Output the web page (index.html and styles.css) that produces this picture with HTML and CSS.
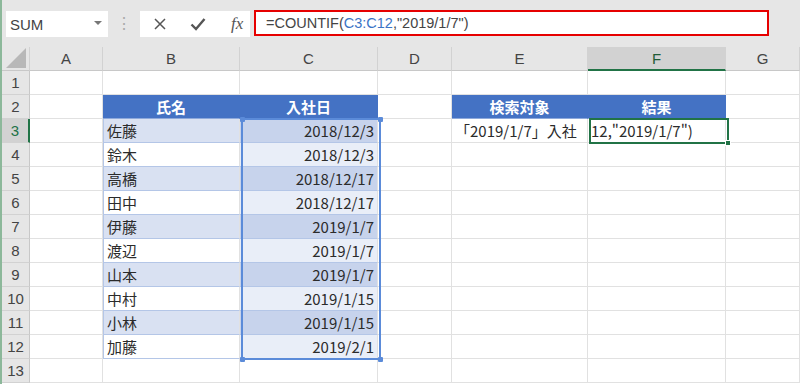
FILE: index.html
```html
<!DOCTYPE html>
<html lang="ja">
<head>
<meta charset="utf-8">
<link rel="stylesheet" href="styles.css">
</head>
<body>
<div class="app">
  <div class="toolbar">
    <div class="namebox"><span>SUM</span><span class="caret"></span></div>
    <div class="vdots">⋮</div>
    <div class="fxbox">
      <svg class="ico" width="14" height="14" viewBox="0 0 14 14"><path d="M2 2 L12 12 M12 2 L2 12" stroke="#555" stroke-width="1.5" fill="none"/></svg>
      <svg class="ico" width="16" height="14" viewBox="0 0 16 14"><path d="M1.5 7.5 L6 12 L14.5 2" stroke="#555" stroke-width="2.4" fill="none"/></svg>
      <span class="fx">fx</span>
    </div>
    <div class="formula">=COUNTIF(<span class="ref">C3:C12</span>,"2019/1/7")</div>
  </div>
  <div class="sheet">
    <div class="ch corner"><svg width="22" height="22" viewBox="0 0 22 22"><polygon points="21,1 21,21 1,21" fill="#b8b8b8"/></svg></div>
    <div class="ch">A</div><div class="ch">B</div><div class="ch">C</div><div class="ch">D</div><div class="ch">E</div><div class="ch sel">F</div><div class="ch">G</div>

    <div class="rh">1</div><div class="c"></div><div class="c"></div><div class="c"></div><div class="c"></div><div class="c"></div><div class="c"></div><div class="c"></div>

    <div class="rh">2</div><div class="c"></div><div class="c th">氏名</div><div class="c th">入社日</div><div class="c"></div><div class="c th">検索対象</div><div class="c th">結果</div><div class="c"></div>

    <div class="rh sel">3</div><div class="c"></div><div class="c nm odd">佐藤</div><div class="c dt odd">2018/12/3</div><div class="c"></div><div class="c tx">「2019/1/7」入社</div><div class="c tx res">12,"2019/1/7")</div><div class="c"></div>

    <div class="rh">4</div><div class="c"></div><div class="c nm">鈴木</div><div class="c dt">2018/12/3</div><div class="c"></div><div class="c"></div><div class="c"></div><div class="c"></div>

    <div class="rh">5</div><div class="c"></div><div class="c nm odd">高橋</div><div class="c dt odd">2018/12/17</div><div class="c"></div><div class="c"></div><div class="c"></div><div class="c"></div>

    <div class="rh">6</div><div class="c"></div><div class="c nm">田中</div><div class="c dt">2018/12/17</div><div class="c"></div><div class="c"></div><div class="c"></div><div class="c"></div>

    <div class="rh">7</div><div class="c"></div><div class="c nm odd">伊藤</div><div class="c dt odd">2019/1/7</div><div class="c"></div><div class="c"></div><div class="c"></div><div class="c"></div>

    <div class="rh">8</div><div class="c"></div><div class="c nm">渡辺</div><div class="c dt">2019/1/7</div><div class="c"></div><div class="c"></div><div class="c"></div><div class="c"></div>

    <div class="rh">9</div><div class="c"></div><div class="c nm odd">山本</div><div class="c dt odd">2019/1/7</div><div class="c"></div><div class="c"></div><div class="c"></div><div class="c"></div>

    <div class="rh">10</div><div class="c"></div><div class="c nm">中村</div><div class="c dt">2019/1/15</div><div class="c"></div><div class="c"></div><div class="c"></div><div class="c"></div>

    <div class="rh">11</div><div class="c"></div><div class="c nm odd">小林</div><div class="c dt odd">2019/1/15</div><div class="c"></div><div class="c"></div><div class="c"></div><div class="c"></div>

    <div class="rh">12</div><div class="c"></div><div class="c nm">加藤</div><div class="c dt">2019/2/1</div><div class="c"></div><div class="c"></div><div class="c"></div><div class="c"></div>

    <div class="rh">13</div><div class="c"></div><div class="c"></div><div class="c"></div><div class="c"></div><div class="c"></div><div class="c"></div><div class="c"></div>

    <div class="range">
      <i class="h tl"></i><i class="h tr"></i><i class="h bl"></i><i class="h br"></i>
    </div>
    <div class="active"><i class="fill"></i></div>
  </div>
</div>
</body>
</html>
```
FILE: styles.css
```css
* { box-sizing: border-box; }
html, body { margin: 0; padding: 0; }
body {
  width: 800px;
  height: 384px;
  overflow: hidden;
  background: #fff;
  font-family: "Liberation Sans", "Noto Sans CJK JP", sans-serif;
}
.app {
  width: 800px;
  height: 384px;
  border-left: 2px solid #8cb89a;
  display: flex;
  flex-direction: column;
}
.toolbar {
  height: 47px;
  background: #e6e6e6;
  display: flex;
  align-items: flex-start;
  padding: 10px 0 0 4px;
  flex: none;
}
.namebox {
  width: 102px;
  height: 26px;
  margin-top: 1px;
  background: #fff;
  display: flex;
  align-items: center;
  justify-content: space-between;
  padding: 0 6px 0 4px;
  font-size: 15px;
  color: #444;
}
.caret {
  width: 0; height: 0;
  border-left: 4px solid transparent;
  border-right: 4px solid transparent;
  border-top: 4px solid #777;
  margin-top: -3px;
}
.vdots {
  width: 32px;
  text-align: center;
  color: #aaa;
  font-size: 16px;
  line-height: 26px;
  margin-top: 1px;
}
.fxbox {
  width: 110px;
  height: 26px;
  margin-top: 1px;
  background: #fff;
  display: flex;
  align-items: center;
  padding-left: 13px;
  gap: 23px;
}
.fx {
  font-family: "Liberation Serif", serif;
  font-style: italic;
  font-size: 17px;
  color: #555;
  margin-left: 2px;
}
.formula {
  margin-left: 4px;
  width: 515px;
  height: 26px;
  border: 2px solid #e60000;
  background: #fff;
  font-size: 14.5px;
  color: #444;
  line-height: 22px;
  padding-left: 10px;
}
.ref { color: #3b74c6; }

.sheet {
  position: relative;
  display: grid;
  grid-template-columns: 28px 73px 137px 138px 74px 136px 138px 74px;
  grid-template-rows: repeat(14, 24px);
  font-family: "Noto Sans CJK JP", "Liberation Sans", sans-serif;
  font-size: 15px;
  color: #2b2b2b;
}
.ch {
  background: #e6e6e6;
  border-right: 1px solid #d2d2d2;
  border-bottom: 1px solid #c8c8c8;
  text-align: center;
  font-family: "Liberation Sans", sans-serif;
  font-size: 15px;
  color: #444;
  line-height: 24px;
}
.ch.corner {
  display: flex;
  align-items: flex-end;
  justify-content: flex-end;
  padding: 0 2px 1px 0;
}
.ch.sel {
  background: #d2d2d2;
  color: #1f5c37;
  border-bottom: 2px solid #217346;
}
.rh {
  background: #e6e6e6;
  border-right: 1px solid #c8c8c8;
  border-bottom: 1px solid #d2d2d2;
  text-align: center;
  font-family: "Liberation Sans", sans-serif;
  font-size: 15px;
  color: #444;
  line-height: 24px;
}
.rh.sel {
  background: #d2d2d2;
  color: #217346;
  border-right: 2px solid #217346;
}
.c {
  border-right: 1px solid #e1e1e1;
  border-bottom: 1px solid #e1e1e1;
  line-height: 23px;
  white-space: nowrap;
  overflow: visible;
}
.th {
  background: #4472c4;
  color: #fff;
  font-weight: bold;
  text-align: center;
  border-right-color: #4472c4;
  border-bottom-color: #8ea9db;
}
.nm {
  padding-left: 4px;
  border-bottom-color: #b4c6e7;
  box-shadow: inset 1px 0 0 #b4c6e7;
}
.nm.odd { background: #d9e1f2; }
.dt {
  text-align: right;
  padding-right: 3px;
  background: #e9eef8;
  border-bottom-color: #b4c6e7;
}
.dt.odd { background: #c7d3ec; }
.tx { padding-left: 3px; }

.range {
  position: absolute;
  left: 239px;
  top: 71px;
  width: 140px;
  height: 242px;
  border: 2px solid #5b8bd9;
}
.h {
  position: absolute;
  width: 5px;
  height: 5px;
  background: #5b8bd9;
  border-radius: 1px;
}
.tl { left: -3.5px; top: -3.5px; }
.tr { right: -3.5px; top: -3.5px; }
.bl { left: -3.5px; bottom: -3.5px; }
.br { right: -3.5px; bottom: -3.5px; }
.active {
  position: absolute;
  left: 587px;
  top: 71px;
  width: 140px;
  height: 26px;
  border: 2px solid #217346;
}
.fill {
  position: absolute;
  right: -4px;
  bottom: -4px;
  width: 6px;
  height: 6px;
  background: #217346;
  border: 1px solid #fff;
}
```
